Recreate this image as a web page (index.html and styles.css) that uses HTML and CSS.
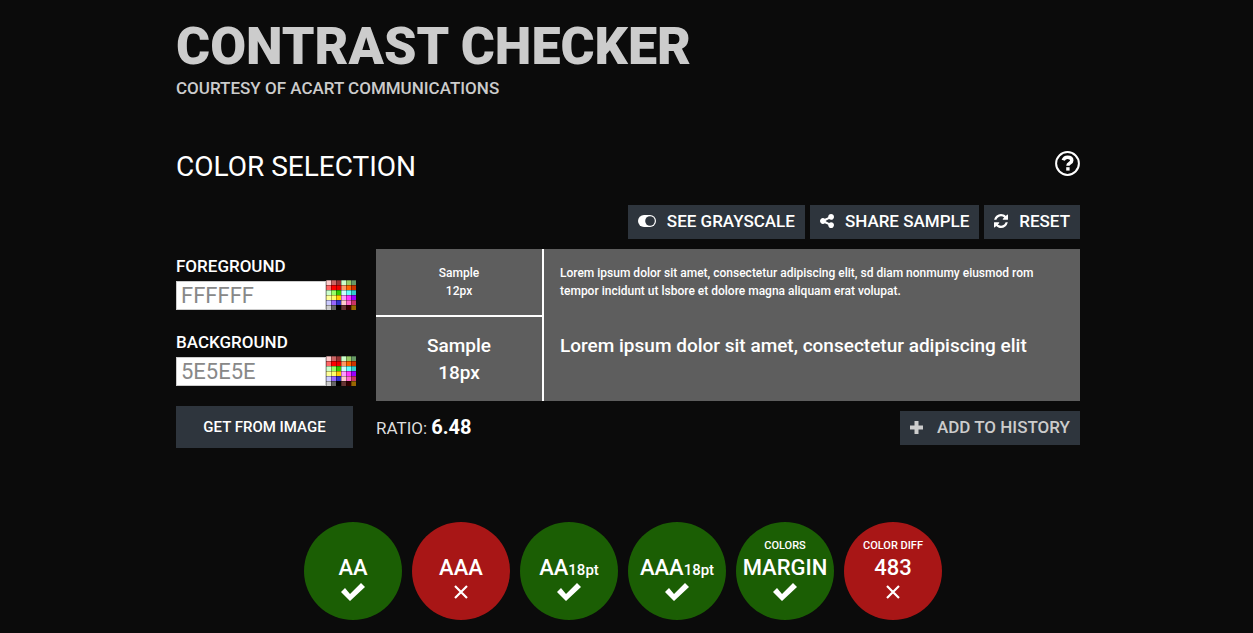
FILE: index.html
```html
<!DOCTYPE html>
<html lang="en">
<head>
    <meta charset="UTF-8">
    <meta name="viewport" content="width=device-width, initial-scale=1.0">
    <title>Contrast Checker</title>
    <link rel="stylesheet" href="styles.css">
</head>
<body>
    <!-- shared icons -->
    <svg class="defs" aria-hidden="true">
        <symbol id="check" viewBox="0 0 24 18">
            <path d="M0 9l4-4 5 6L20 0l4 4L9 18z"/>
        </symbol>
        <symbol id="cross" viewBox="0 0 14 14">
            <path d="M1 1l12 12M13 1L1 13" fill="none" stroke="currentColor" stroke-width="2.2"/>
        </symbol>
        <symbol id="palette" viewBox="0 0 30 30">
            <path fill="#fcc" d="M0 0h5v5H0zM15 20h5v5h-5z"/>
            <path fill="#c66" d="M5 0h5v5H5z"/>
            <path fill="#933" d="M10 0h5v5h-5z"/>
            <path fill="#cfc" d="M15 0h5v5h-5zM0 10h5v5H0z"/>
            <path fill="#9c6" d="M20 0h5v5h-5z"/>
            <path fill="#696" d="M25 0h5v5h-5z"/>
            <path fill="#f66" d="M0 5h5v5H0z"/>
            <path fill="#f00" d="M5 5h5v5H5z"/>
            <path fill="#e00" d="M10 5h5v5h-5z"/>
            <path fill="#f96" d="M15 5h5v5h-5z"/>
            <path fill="#f60" d="M20 5h5v5h-5z"/>
            <path fill="#c30" d="M25 5h5v5h-5z"/>
            <path fill="#9f6" d="M5 10h5v5H5z"/>
            <path fill="#3c0" d="M10 10h5v5h-5z"/>
            <path fill="#cff" d="M15 10h5v5h-5z"/>
            <path fill="#6ff" d="M20 10h5v5h-5z"/>
            <path fill="#3cc" d="M25 10h5v5h-5z"/>
            <path fill="#ff9" d="M0 15h5v5H0z"/>
            <path fill="#ff6" d="M5 15h5v5H5z"/>
            <path fill="#fc0" d="M10 15h5v5h-5z"/>
            <path fill="#f9f" d="M15 15h5v5h-5z"/>
            <path fill="#f3f" d="M20 15h5v5h-5z"/>
            <path fill="#90f" d="M25 15h5v5h-5z"/>
            <path fill="#ccf" d="M0 20h5v5H0z"/>
            <path fill="#96f" d="M5 20h5v5H5z"/>
            <path fill="#33c" d="M10 20h5v5h-5z"/>
            <path fill="#f6c" d="M20 20h5v5h-5z"/>
            <path fill="#c36" d="M25 20h5v5h-5z"/>
            <path fill="#ccc" d="M0 25h5v5H0z"/>
            <path fill="#666" d="M5 25h5v5H5z"/>
            <path fill="#000" d="M10 25h5v5h-5z"/>
            <path fill="#633" d="M15 25h5v5h-5z"/>
            <path fill="#300" d="M20 25h5v5h-5z"/>
            <path fill="#960" d="M25 25h5v5h-5z"/>
            <path fill="none" stroke="#000" stroke-opacity=".3" d="M0 .5h30M0 5.5h30M0 10.5h30M0 15.5h30M0 20.5h30M0 25.5h30M.5 0v30M5.5 0v30M10.5 0v30M15.5 0v30M20.5 0v30M25.5 0v30"/>
        </symbol>
    </svg>

    <div class="container">
        <header>
            <h1>CONTRAST CHECKER</h1>
            <p class="courtesy">COURTESY OF ACART COMMUNICATIONS</p>
        </header>

        <div class="section-head">
            <h2>COLOR SELECTION</h2>
            <button class="help" type="button" aria-label="Help">
                <svg width="25" height="25" viewBox="0 0 25 25"><circle cx="12.5" cy="12.5" r="11.4" fill="none" stroke="currentColor" stroke-width="2"/><path d="M8.2 9.3C9 7 10.700 6.200 12.600 6.200c2.500 0 4.200 1.300 4.200 3.300 0 2.700-3.900 2.600-3.900 5.200" fill="none" stroke="currentColor" stroke-width="3.4"/><path d="M11.200 16.200h3.400v3.400h-3.400z"/></svg>
            </button>
        </div>

        <div class="toolbar">
            <button class="btn" type="button">
                <svg width="18" height="12" viewBox="0 0 18 12"><rect width="18" height="12" rx="6"/><circle class="knob" cx="12" cy="6" r="4.800"/></svg>
                SEE GRAYSCALE
            </button>
            <button class="btn" type="button">
                <svg width="14" height="14" viewBox="128 128 1536 1536"><path d="M1344 1024q133 0 226.500 93.500t93.500 226.500-93.500 226.500-226.500 93.500-226.500-93.500-93.500-226.500q0-12 2-34l-360-180q-92 86-218 86-133 0-226.500-93.500t-93.500-226.500 93.500-226.500 226.500-93.500q126 0 218 86l360-180q-2-22-2-34 0-133 93.500-226.500t226.500-93.500 226.500 93.500 93.500 226.500-93.500 226.500-226.500 93.500q-126 0-218-86l-360 180q2 22 2 34t-2 34l360 180q92-86 218-86z"/></svg>
                SHARE SAMPLE
            </button>
            <button class="btn" type="button">
                <svg width="14" height="14" viewBox="0 0 1536 1536"><path d="M1511 928q0 5-1 7-64 268-268 434.500t-478 166.500q-146 0-282.500-55t-243.500-157l-129 129q-19 19-45 19t-45-19-19-45v-448q0-26 19-45t45-19h448q26 0 45 19t19 45-19 45l-137 137q71 66 161 102t187 36q134 0 250-65t186-179q11-17 53-117 8-23 30-23h192q13 0 22.500 9.500t9.500 22.500zm25-800v448q0 26-19 45t-45 19h-448q-26 0-45-19t-19-45 19-45l138-138q-148-137-349-137-134 0-250 65t-186 179q-11 17-53 117-8 23-30 23h-199q-13 0-22.500-9.500t-9.500-22.500v-7q65-268 270-434.500t480-166.500q146 0 284 55.500t245 156.500l130-129q19-19 45-19t45 19 19 45z"/></svg>
                RESET
            </button>
        </div>

        <main class="checker">
            <form class="colors">
                <div class="field">
                    <label for="foreground">FOREGROUND</label>
                    <div class="picker">
                        <input type="text" id="foreground" placeholder="FFFFFF">
                        <button class="swatches" type="button" aria-label="Pick foreground"><svg width="30" height="30"><use href="#palette"/></svg></button>
                    </div>
                </div>
                <div class="field">
                    <label for="background">BACKGROUND</label>
                    <div class="picker">
                        <input type="text" id="background" placeholder="5E5E5E">
                        <button class="swatches" type="button" aria-label="Pick background"><svg width="30" height="30"><use href="#palette"/></svg></button>
                    </div>
                </div>
                <button class="from-image" type="button">GET FROM IMAGE</button>
            </form>

            <div class="preview">
                <div class="sample">
                    <div class="size small">Sample<br>12px</div>
                    <p class="text small">Lorem ipsum dolor sit amet, consectetur adipiscing elit, sd diam nonmumy eiusmod rom tempor incidunt ut lsbore et dolore magna aliquam erat volupat.</p>
                    <div class="size large">Sample<br>18px</div>
                    <p class="text large">Lorem ipsum dolor sit amet, consectetur adipiscing elit</p>
                </div>
                <div class="summary">
                    <p class="ratio">RATIO: <strong>6.48</strong></p>
                    <button class="btn history" type="button">
                        <svg width="13" height="13" viewBox="0 0 13 13"><path d="M4.500 0h4v4.500H13v4H8.500V13h-4V8.500H0v-4h4.500z"/></svg>
                        ADD TO HISTORY
                    </button>
                </div>
            </div>
        </main>

        <div class="results">
            <div class="result pass">
                <span class="grade">AA</span>
                <svg class="mark" width="24" height="18"><use href="#check"/></svg>
            </div>
            <div class="result fail">
                <span class="grade">AAA</span>
                <svg class="mark" width="14" height="14"><use href="#cross"/></svg>
            </div>
            <div class="result pass">
                <span class="grade">AA<small>18pt</small></span>
                <svg class="mark" width="24" height="18"><use href="#check"/></svg>
            </div>
            <div class="result pass">
                <span class="grade">AAA<small>18pt</small></span>
                <svg class="mark" width="24" height="18"><use href="#check"/></svg>
            </div>
            <div class="result pass">
                <span class="caption">COLORS</span>
                <span class="grade">MARGIN</span>
                <svg class="mark" width="24" height="18"><use href="#check"/></svg>
            </div>
            <div class="result fail">
                <span class="caption">COLOR DIFF</span>
                <span class="grade">483</span>
                <svg class="mark" width="14" height="14"><use href="#cross"/></svg>
            </div>
        </div>
    </div>
</body>
</html>
```

FILE: styles.css
```css
* {
    box-sizing: border-box;
}

body {
    margin: 0;
    background-color: #0b0b0b;
    color: #fff;
    font-family: Roboto, "Liberation Sans", sans-serif;
    font-size: 17px;
}

h1, h2, p {
    margin: 0;
}

button {
    border: none;
    padding: 0;
    background: none;
    color: inherit;
    font-family: inherit;
    cursor: pointer;
}

svg {
    display: block;
    fill: currentColor;
}

.defs {
    position: absolute;
    width: 0;
    height: 0;
}

.container {
    max-width: 907px;
    margin: 0 auto;
    padding: 17px 0 12px 3px;
}

h1 {
    color: #ccc;
    font-size: 52px;
    font-weight: 900;
    line-height: 60px;
}

.courtesy {
    color: #ccc;
    font-weight: 500;
    line-height: 22px;
}

.section-head {
    display: flex;
    justify-content: space-between;
    align-items: flex-start;
    margin-top: 52px;
}

h2 {
    font-size: 28px;
    font-weight: 400;
    line-height: 32px;
}

.toolbar {
    display: flex;
    justify-content: flex-end;
    gap: 5px;
    margin-top: 22px;
}

.btn {
    display: flex;
    align-items: center;
    gap: 11px;
    height: 34px;
    padding: 0 10px 2px;
    background-color: #2e353d;
    font-size: 17px;
    font-weight: 500;
}

.knob {
    fill: #2e353d;
}

.checker {
    display: flex;
    gap: 20px;
    margin-top: 10px;
}

.colors {
    width: 180px;
    padding-top: 5px;
}

.field {
    margin-bottom: 20px;
}

label {
    display: block;
    font-weight: 500;
    line-height: 24px;
    margin-bottom: 2px;
}

.picker {
    display: flex;
    align-items: flex-end;
}

.picker input {
    width: 150px;
    height: 29px;
    padding: 0 4px;
    border: 1px solid #ccc;
    border-radius: 0;
    background-color: #fff;
    font-family: inherit;
    font-size: 22px;
}

.picker input::placeholder {
    color: #888;
}

.from-image {
    width: 177px;
    height: 42px;
    background-color: #2e353d;
    font-size: 15px;
    font-weight: 500;
}

.preview {
    flex: 1;
}

.sample {
    display: grid;
    grid-template-columns: 168px 1fr;
    grid-template-rows: 68px 84px;
    background-color: #5e5e5e;
    font-weight: 500;
}

.size {
    border-right: 2px solid #fff;
    text-align: center;
}

.size.small {
    border-bottom: 2px solid #fff;
}

.text {
    padding-left: 16px;
    padding-right: 16px;
}

.small {
    padding-top: 15px;
    font-size: 12px;
    line-height: 18px;
}

.large {
    padding-top: 15px;
    font-size: 19px;
    line-height: 27px;
}

.summary {
    display: flex;
    justify-content: space-between;
    align-items: center;
    margin-top: 10px;
}

.ratio {
    padding-bottom: 2px;
    color: #ddd;
}

.ratio strong {
    color: #fff;
    font-size: 20px;
}

.history {
    gap: 14px;
    color: #ccc;
}

.results {
    display: flex;
    justify-content: center;
    margin-top: 74px;
}

.result {
    display: grid;
    grid-template-rows: 33px 26px 22px;
    justify-items: center;
    align-items: center;
    width: 98px;
    height: 98px;
    margin-right: 10px;
    border-radius: 50%;
    font-weight: 500;
}

.pass {
    background-color: #1b5e04;
}

.fail {
    background-color: #a81616;
}

.caption {
    grid-row: 1;
    align-self: end;
    margin-bottom: 1px;
    font-size: 11px;
    line-height: 16px;
}

.grade {
    grid-row: 2;
    font-size: 22px;
    line-height: 26px;
}

.grade small {
    font-size: 15px;
    line-height: 1;
}

.mark {
    grid-row: 3;
}
```
